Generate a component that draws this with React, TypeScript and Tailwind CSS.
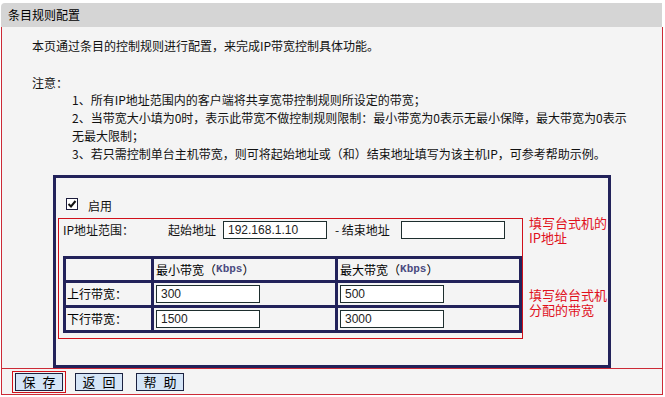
import type { ReactNode } from 'react';

const cjk = 'font-["Noto_Sans_CJK_SC","Liberation_Sans",sans-serif]';

const Field = ({ value, w = 'w-[104px]' }: { value: string; w?: string }) => (
	<div
		className={`${w} h-[18px] border border-[#1e2e2e] bg-white pl-[4px] flex items-center text-[12px] text-[#222] font-["Liberation_Sans",sans-serif]`}
	>
		{value}
	</div>
);

const Btn = ({ label }: { label: string }) => (
	<div className="w-[48px] h-[18px] border border-[#1b2140] bg-[#d5e5f7] flex items-center justify-center gap-[7px] text-[13px] text-black leading-none whitespace-nowrap">
		{label.split('').map((c) => (
			<span key={c}>{c}</span>
		))}
	</div>
);

const Cell = ({ children, pl = 'pl-[2px]' }: { children?: ReactNode; pl?: string }) => (
	<div className={`bg-[#f4f4f4] flex items-center ${pl} text-[12px] text-black`}>
		{children}
	</div>
);

const Kbps = () => (
	<>
		（<span className='font-["Liberation_Mono",monospace] text-[11px] font-bold text-[#4a4a80]'>Kbps</span>）
	</>
);

const App = () => {
	return (
		<div className={`w-[665px] h-[397px] bg-white overflow-hidden ${cjk}`}>
			{/* 标题 */}
			<div className="mt-[3px] ml-[1px] w-[661px] h-[24px] bg-[#d5d5d5] rounded-tl-[4px] pl-[7px] flex items-center text-[12px] text-black">
				条目规则配置
			</div>

			{/* 主体 */}
			<div className="ml-[1px] w-[662px] border-x border-[#cc2a36] bg-[#f4f4f4] pt-[10px] text-[12px] text-[#111]">
				<p className="pl-[30px] leading-[18px]">
					本页通过条目的控制规则进行配置，来完成IP带宽控制具体功能。
				</p>
				<p className="pl-[30px] mt-[19px] leading-[17px]">注意：</p>
				<div className="pl-[70px] leading-[18px] whitespace-nowrap">
					<p>1、所有IP地址范围内的客户端将共享宽带控制规则所设定的带宽；</p>
					<p>
						2、当带宽大小填为0时，表示此带宽不做控制规则限制：最小带宽为0表示无最小保障，最大带宽为0表示
					</p>
					<p>无最大限制；</p>
					<p>3、若只需控制单台主机带宽，则可将起始地址或（和）结束地址填写为该主机IP，可参考帮助示例。</p>
				</div>

				<div className="mt-[12px] ml-[51px] w-[558px] h-[193px] border-[3px] border-[#22225a]">
					{/* 启用 */}
					<div className="mt-[20px] ml-[10px] flex items-center h-[12px]">
						<span className="w-[12px] h-[12px] border border-[#1c1c3c] bg-white flex items-center justify-center">
							<svg width="10" height="10" viewBox="0 0 10 10">
								<path
									d="M1.5 5 L4 7.5 L8.5 2"
									fill="none"
									stroke="#111"
									strokeWidth="2"
								/>
							</svg>
						</span>
						<span className="ml-[10px] mt-[3px] text-[12px]">启用</span>
					</div>

					<div className="flex mt-[8px] ml-[2px]">
						<div className="w-[465px] h-[121px] border border-[#d0101a] pl-[4px]">
							<div className="flex items-center mt-[2px] h-[18px]">
								<span className="w-[105px]">IP地址范围：</span>
								<span className="w-[55px]">起始地址</span>
								<Field value="192.168.1.10" />
								<span className="ml-[8px] w-[66px]">- 结束地址</span>
								<Field value="" />
							</div>

							<div className="mt-[17px] w-[459px] grid grid-cols-[85px_181px_181px] grid-rows-[21px_22px_22px] gap-[3px] p-[3px] bg-[#22225a]">
								<Cell />
								<Cell>
									最小带宽
									<Kbps />
								</Cell>
								<Cell>
									最大带宽
									<Kbps />
								</Cell>
								<Cell pl="pl-[1px]">上行带宽：</Cell>
								<Cell>
									<Field value="300" />
								</Cell>
								<Cell>
									<Field value="500" />
								</Cell>
								<Cell pl="pl-[1px]">下行带宽：</Cell>
								<Cell>
									<Field value="1500" />
								</Cell>
								<Cell>
									<Field value="3000" />
								</Cell>
							</div>
						</div>

						<div className="ml-[6px] text-[13px] leading-[15px] text-[#e0101c]">
							<p className="-mt-[3px]">
								填写台式机的
								<br />
								IP地址
							</p>
							<p className="mt-[42px]">
								填写给台式机
								<br />
								分配的带宽
							</p>
						</div>
					</div>
				</div>
			</div>

			{/* 按钮 */}
			<div className="ml-[1px] w-[662px] h-[27px] border border-[#cc2a36] bg-[#f4f4f4] pl-[10px] flex items-center">
				<div className="border border-[#d0101a] px-[2px] py-[1px]">
					<Btn label="保存" />
				</div>
				<div className="ml-[9px]">
					<Btn label="返回" />
				</div>
				<div className="ml-[13px]">
					<Btn label="帮助" />
				</div>
			</div>
		</div>
	);
};

export default App;
